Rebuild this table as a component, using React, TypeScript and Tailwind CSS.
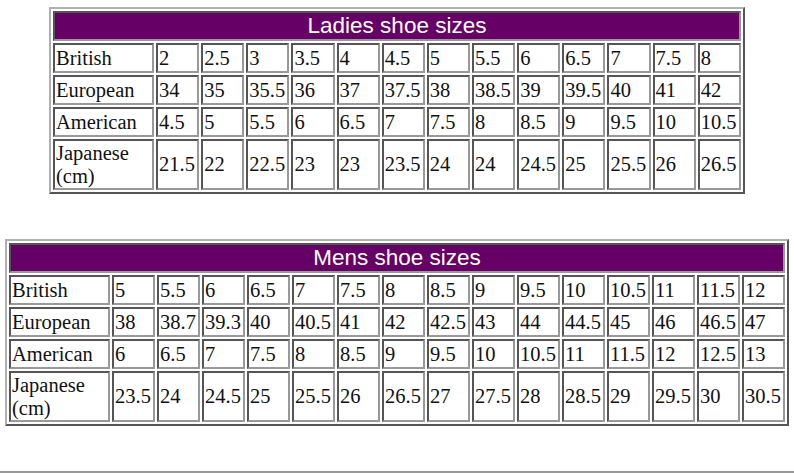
import React from "react";

// shoe size charts: two old-style bordered tables
const ladies = {
  title: "Ladies shoe sizes",
  rows: [
    ["British", "2", "2.5", "3", "3.5", "4", "4.5", "5", "5.5", "6", "6.5", "7", "7.5", "8"],
    ["European", "34", "35", "35.5", "36", "37", "37.5", "38", "38.5", "39", "39.5", "40", "41", "42"],
    ["American", "4.5", "5", "5.5", "6", "6.5", "7", "7.5", "8", "8.5", "9", "9.5", "10", "10.5"],
    ["Japanese (cm)", "21.5", "22", "22.5", "23", "23", "23.5", "24", "24", "24.5", "25", "25.5", "26", "26.5"],
  ],
};

const mens = {
  title: "Mens shoe sizes",
  rows: [
    ["British", "5", "5.5", "6", "6.5", "7", "7.5", "8", "8.5", "9", "9.5", "10", "10.5", "11", "11.5", "12"],
    ["European", "38", "38.7", "39.3", "40", "40.5", "41", "42", "42.5", "43", "44", "44.5", "45", "46", "46.5", "47"],
    ["American", "6", "6.5", "7", "7.5", "8", "8.5", "9", "9.5", "10", "10.5", "11", "11.5", "12", "12.5", "13"],
    ["Japanese (cm)", "23.5", "24", "24.5", "25", "25.5", "26", "26.5", "27", "27.5", "28", "28.5", "29", "29.5", "30", "30.5"],
  ],
};

const cell =
  "border-2 border-t-[#555] border-l-[#555] border-r-[#999] border-b-[#999] pl-[1px] pr-0 py-0 text-left align-middle font-['Liberation_Serif','Times_New_Roman',serif] text-[20.5px] leading-[23px] text-[#111]";

function SizeTable({
  data,
  width,
  labelWidth,
}: {
  data: { title: string; rows: string[][] };
  width: string;
  labelWidth: string;
}) {
  const cols = data.rows[0].length;
  return (
    <table
      className={`mx-auto table-fixed border-separate border-spacing-[2px] border-2 border-t-[#b0b0b0] border-l-[#b0b0b0] border-r-[#555] border-b-[#555] ${width}`}
    >
      <colgroup>
        <col className={labelWidth} />
        {data.rows[0].slice(1).map((_, i) => (
          <col key={i} />
        ))}
      </colgroup>
      <tbody>
        <tr>
          <td
            colSpan={cols}
            className="h-[30px] border-2 border-t-[#555] border-l-[#555] border-r-[#999] border-b-[#999] bg-[#660066] p-0 text-center align-middle font-['Liberation_Sans',Arial,sans-serif] text-[22.5px] leading-none text-white"
          >
            {data.title}
          </td>
        </tr>
        {data.rows.map((row, r) => (
          <tr key={r} className={r === 3 ? "h-[51px]" : "h-[30px]"}>
            {row.map((v, c) => (
              <td key={c} className={cell}>
                {v}
              </td>
            ))}
          </tr>
        ))}
      </tbody>
    </table>
  );
}

export default function App() {
  return (
    <div className="min-h-[473px] bg-white pt-[7px]">
      <SizeTable data={ladies} width="w-[696px]" labelWidth="w-[101px]" />
      <div className="h-[45px]" />
      <SizeTable data={mens} width="w-[784px]" labelWidth="w-[101px]" />
      <div className="mt-[45px] border-t-2 border-t-[#999]" />
    </div>
  );
}
